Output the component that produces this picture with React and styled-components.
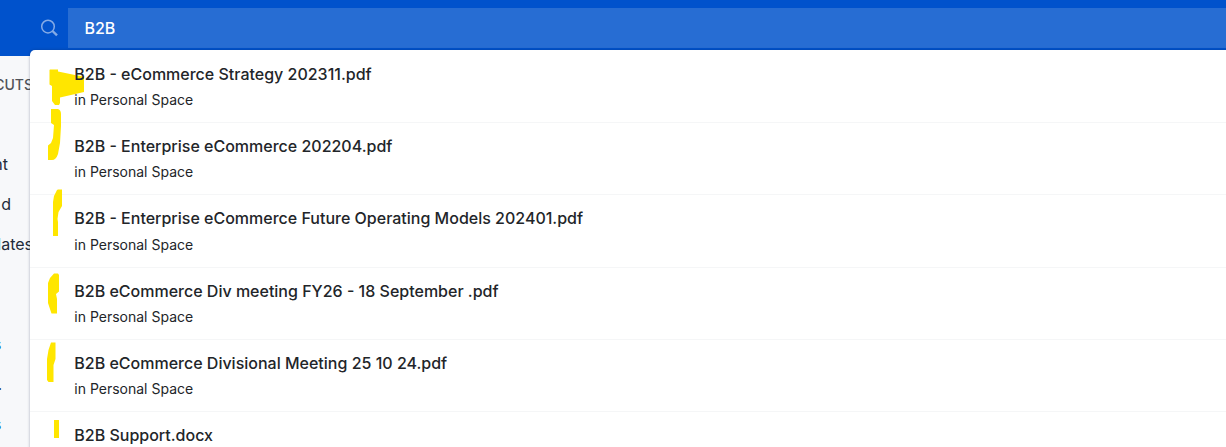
import React from "react";
import styled, { createGlobalStyle } from "styled-components";

const GlobalStyle = createGlobalStyle`
  * { box-sizing: border-box; }
  body {
    margin: 0;
    overflow: hidden;
    background: #f7f8fa;
    font-family: Inter, "Liberation Sans", sans-serif;
    color: #222529;
  }
`;

const Page = styled.div`
  position: relative;
  width: 100%;
  height: 447px;
  overflow: hidden;
`;

const TopBar = styled.header`
  display: flex;
  height: 56px;
  padding: 8px 0 8px 40px;
  background: #0052cc;
`;

const SearchIcon = styled.svg`
  flex: none;
  width: 20px;
  height: 20px;
  margin: 10px 8px 0 0;
  fill: none;
  stroke: #84abe6;
`;

const SearchField = styled.div`
  flex: 1;
  padding-left: 16.4px;
  background: #276dd3;
  color: #fff;
  font-size: 16px;
  font-weight: 500;
  line-height: 40px;
`;

const Sidebar = styled.nav`
  width: 60px;
  display: flex;
  flex-direction: column;
  padding-top: 9px;
`;

const SidebarItem = styled.div`
  display: flex;
  justify-content: flex-end;
  width: ${(p) => p.$end}px;
  height: 40px;
  line-height: 40px;
  font-size: 16px;
  white-space: nowrap;
  color: ${(p) => (p.$link ? "#0b66c3" : "#222b3a")};
  margin-bottom: ${(p) => p.$gap || 0}px;
`;

const SidebarHeading = styled(SidebarItem)`
  font-size: 14px;
  font-weight: 500;
  color: #505258;
`;

const Results = styled.section`
  position: absolute;
  top: 50px;
  left: 29.5px;
  right: -10px;
  height: 420px;
  background: #fff;
  border-radius: 5px 0 0 0;
  box-shadow: 0 0 3px rgba(9, 30, 66, 0.35);
`;

const ResultList = styled.ul`
  margin: 0;
  padding: 0;
  list-style: none;
`;

const Result = styled.li`
  height: 72.25px;
  padding: 11px 0 0 44.8px;
  border-top: 1px solid #f5f6f7;

  &:first-child {
    height: 72.05px;
    border-top-color: transparent;
  }
`;

const Title = styled.div`
  position: relative;
  z-index: 1;
  margin-bottom: 0.25px;
  font-size: 16px;
  font-weight: 500;
  line-height: 25px;
  white-space: pre;
`;

const Location = styled.div`
  position: relative;
  z-index: 1;
  font-size: 14px;
  line-height: 26px;
`;

const Marker = styled.svg`
  position: absolute;
  top: 0;
  left: 0.5px;
  width: 60px;
  height: 397px;
  fill: #ffe600;
`;

const files = [
  "B2B - eCommerce Strategy 202311.pdf",
  "B2B - Enterprise eCommerce 202204.pdf",
  "B2B - Enterprise eCommerce Future Operating Models 202401.pdf",
  "B2B eCommerce Div meeting FY26 - 18 September .pdf",
  "B2B eCommerce Divisional Meeting 25 10 24.pdf",
  "B2B Support.docx",
];

export default function App() {
  return (
    <Page>
      <GlobalStyle />
      <TopBar>
        <SearchIcon viewBox="0 0 20 20">
          <circle cx="8" cy="8.600" r="6.300" strokeWidth="1.500" />
          <path d="M12.500 13 L17 17.300" strokeWidth="2.400" />
        </SearchIcon>
        <SearchField>B2B</SearchField>
      </TopBar>
      <Sidebar>
        <SidebarHeading $end={33} $gap={39}>CUTS</SidebarHeading>
        <SidebarItem $end={8}>nt</SidebarItem>
        <SidebarItem $end={11}>d</SidebarItem>
        <SidebarItem $end={33} $gap={60}>lates</SidebarItem>
        <SidebarItem $end={1.5} $link>s</SidebarItem>
        <SidebarItem $end={2}>.</SidebarItem>
        <SidebarItem $end={1.5} $link>s</SidebarItem>
      </Sidebar>
      <Results>
        <ResultList>
          {files.map((name) => (
            <Result key={name}>
              <Title>{name}</Title>
              <Location>in Personal Space</Location>
            </Result>
          ))}
        </ResultList>
        <Marker viewBox="30 50 60 397">
          <path d="M50 69.5 H58 V71.5 L75 75 L84 76.5 V92 L60 97.5 V103 L59 105 H55 L52 101 V86 L49.5 84.5 V70Z" />
          <path d="M51 109 H58 Q61 110 61 114 V126 L60 143 L58 154 Q56 160 52 160 H48 V145.500 L51 143 L53 138 L54 125 L51 123Z" />
          <path d="M58 189.500 H62 V206 L58.500 212 L57.500 219 L58 222 V236 H53 V202 L54 196 L57 190Z" />
          <path d="M54 273.500 H58 L59 275 V291.500 L56 294 L57 299 V313.500 H51.500 L48 303 V283 L50 278Z" />
          <path d="M51 342.500 H55.500 V359 L53.500 365 V382 H48.500 L47 380 V359 L48.500 350Z" />
          <path d="M54 420 H59 V438 H54Z" />
        </Marker>
      </Results>
    </Page>
  );
}
